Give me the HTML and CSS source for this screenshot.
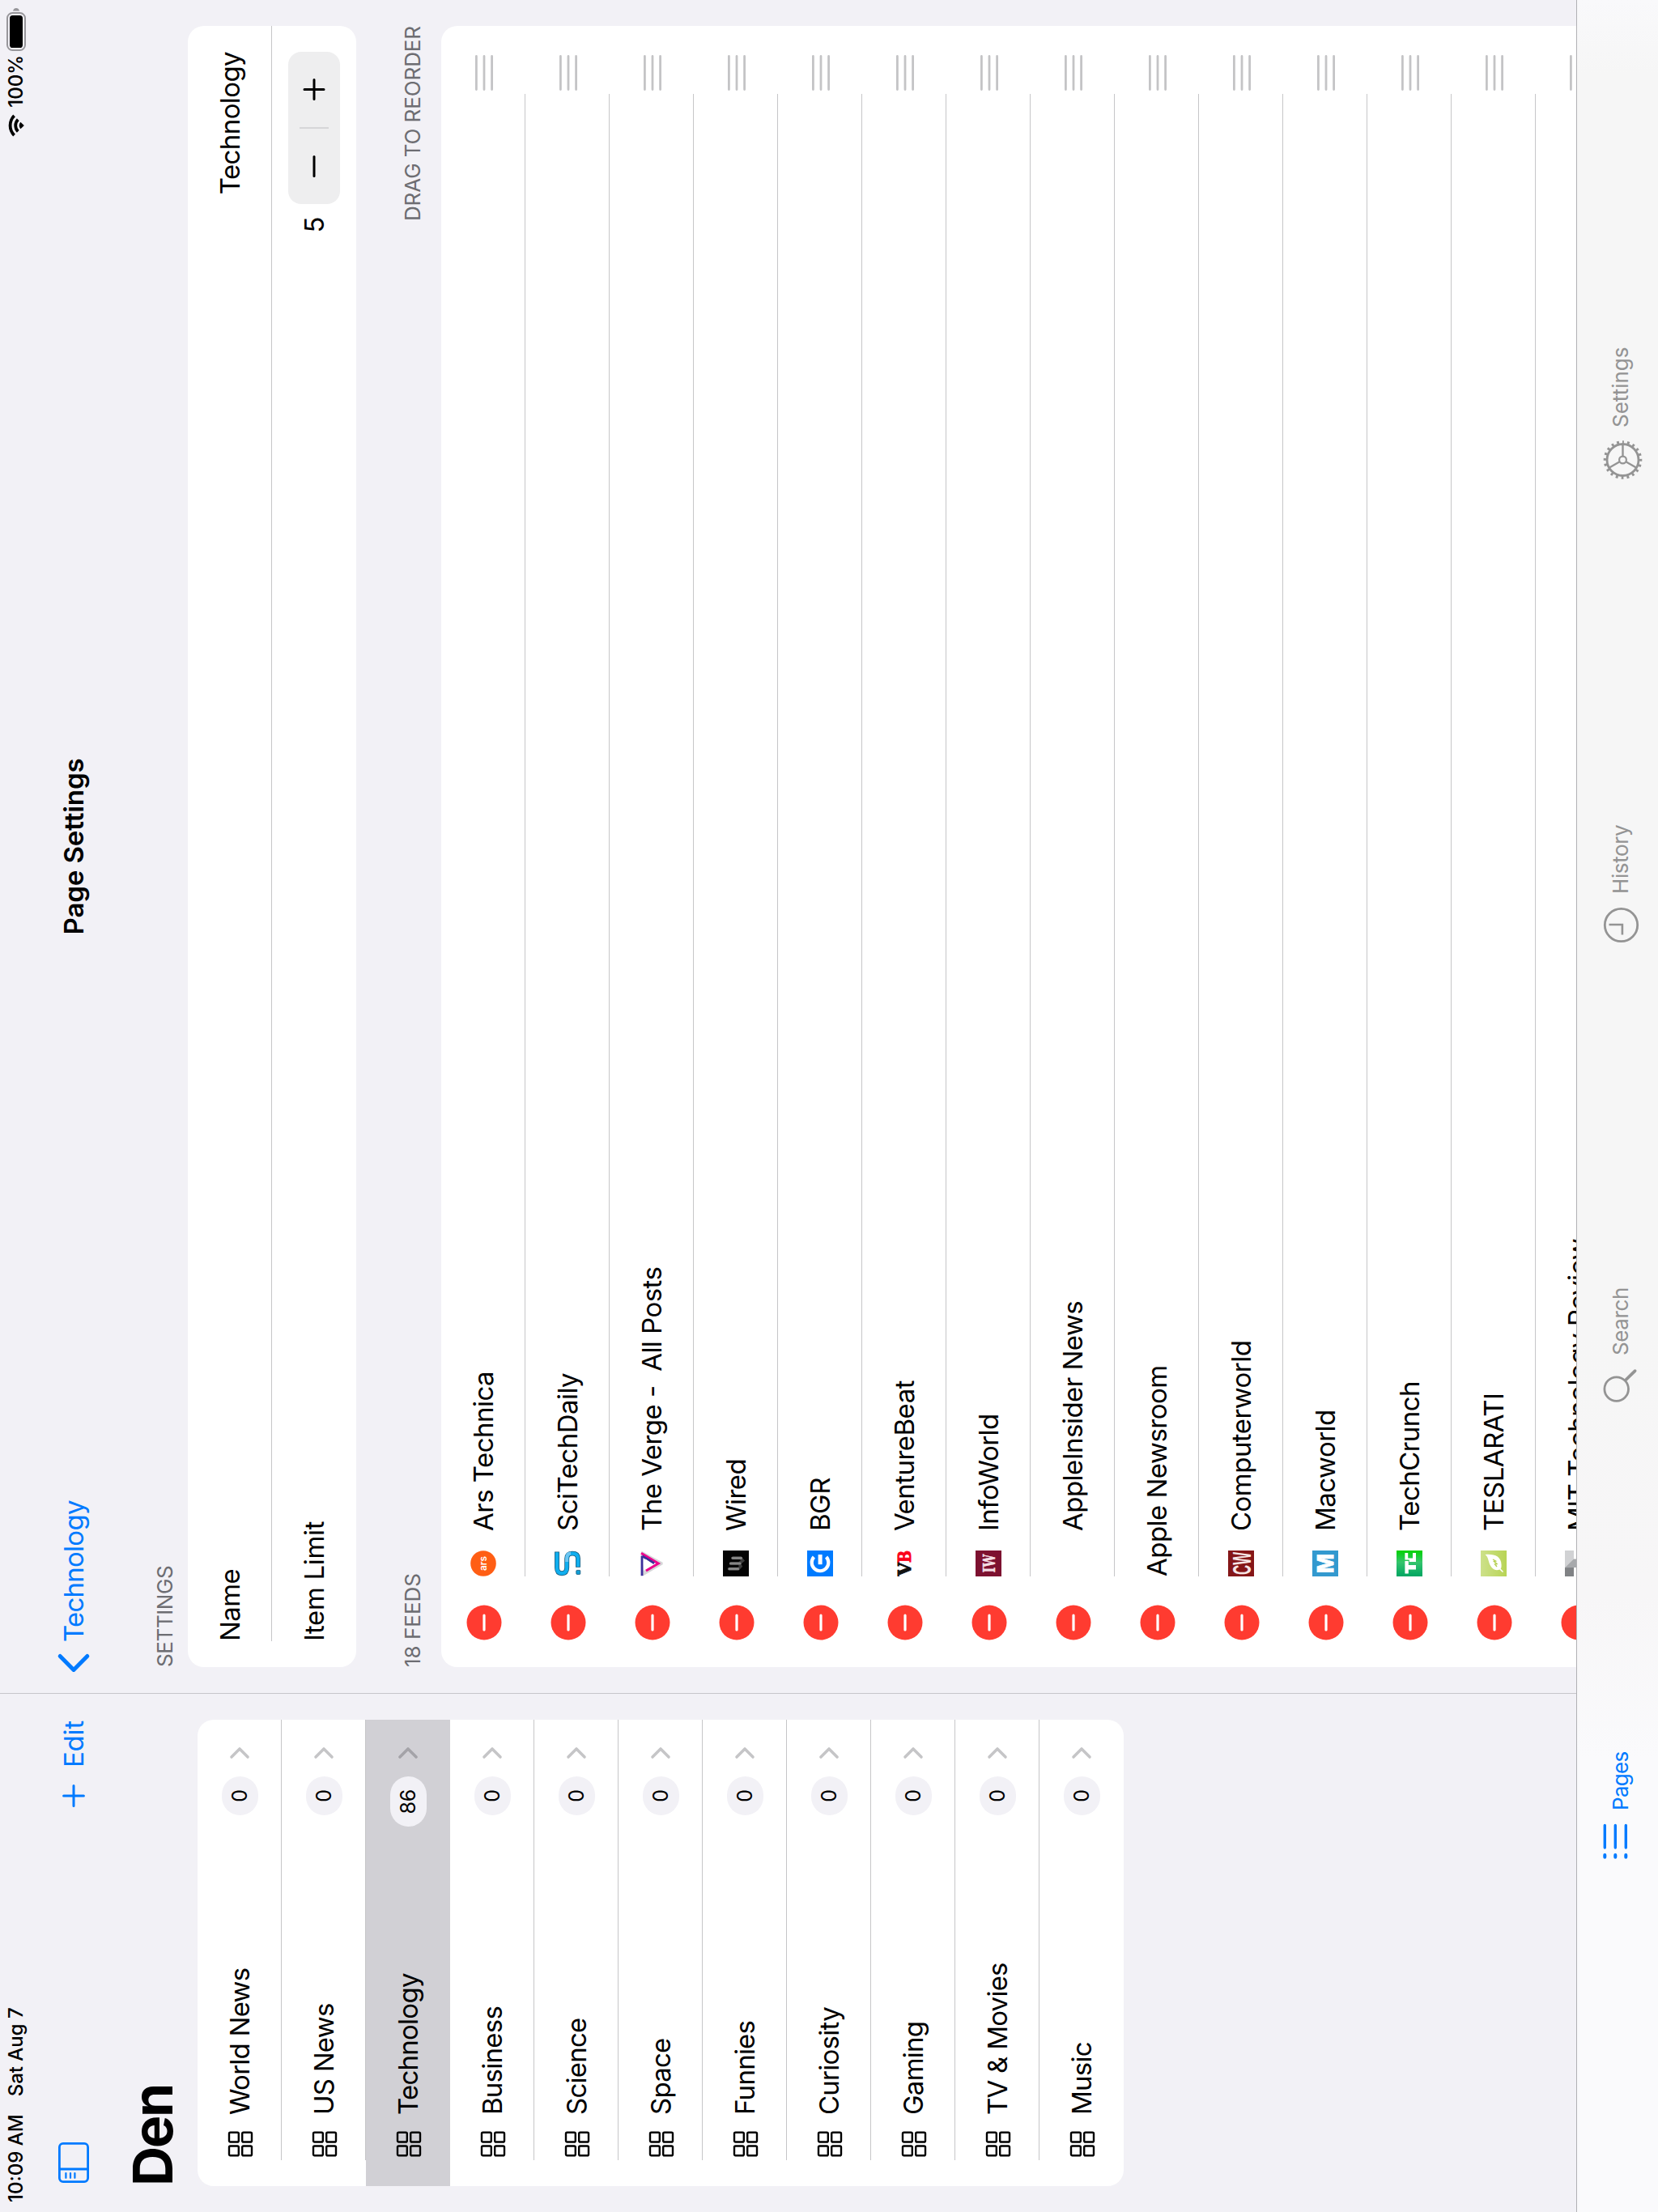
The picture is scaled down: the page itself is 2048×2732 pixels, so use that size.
FILE: index.html
```html
<!DOCTYPE html>
<html lang="en">
<head>
<meta charset="utf-8">
<title>Page Settings</title>
<link rel="stylesheet" href="styles.css">
</head>
<body>
<svg class="defs" aria-hidden="true">
  <symbol id="grid" viewBox="0 0 32 32"><g fill="none" stroke="currentColor" stroke-width="2.4"><rect x="1.7" y="2" width="11.8" height="11.8" rx="1.6"/><rect x="18.5" y="2" width="11.8" height="11.8" rx="1.6"/><rect x="1.7" y="18.2" width="11.8" height="11.8" rx="1.6"/><rect x="18.5" y="18.2" width="11.8" height="11.8" rx="1.6"/></g></symbol>
  <symbol id="chev" viewBox="0 0 16 26"><path d="M3 3 L13 13 L3 23" fill="none" stroke="currentColor" stroke-width="3.6" stroke-linecap="round" stroke-linejoin="round"/></symbol>
  <symbol id="del" viewBox="0 0 44 44"><circle cx="22" cy="22" r="21.5" fill="#ff3b30"/><path d="M13 22H31" stroke="#fff" stroke-width="3.2" stroke-linecap="round"/></symbol>
  <symbol id="grip" viewBox="0 0 44 24"><path d="M1.5 3.4H42.5M1.5 13H42.5M1.5 22.6H42.5" stroke="#c4c4c6" stroke-width="2.8" stroke-linecap="round"/></symbol>
</svg>

<div class="device">
  <div class="panes">
    <aside class="sidebar">
      <div class="status"><span class="time">10:09 AM</span><span class="date">Sat Aug 7</span></div>
      <div class="nav">
        <svg class="sidebar-icon" viewBox="0 0 50 38"><g fill="none" stroke="currentColor" stroke-width="2.8"><rect x="1.4" y="1.4" width="47.2" height="35.2" rx="4.5"/><path d="M17 1.4V36.6"/><path d="M6.2 9.4H12M6.2 15H12M6.2 20.4H12" stroke-width="2.2" stroke-linecap="round"/></g></svg>
        <svg class="plus" viewBox="0 0 28 28"><path d="M14 1.6V26.4M1.6 14H26.4" stroke="currentColor" stroke-width="3" stroke-linecap="round"/></svg>
        <span class="edit">Edit</span>
      </div>
      <h1>Den</h1>
      <ul class="pages">
        <li><svg class="gi"><use href="#grid"/></svg><span class="label">World News</span><span class="badge">0</span><svg class="chev"><use href="#chev"/></svg></li>
        <li><svg class="gi"><use href="#grid"/></svg><span class="label">US News</span><span class="badge">0</span><svg class="chev"><use href="#chev"/></svg></li>
        <li class="selected"><svg class="gi"><use href="#grid"/></svg><span class="label">Technology</span><span class="badge">86</span><svg class="chev"><use href="#chev"/></svg></li>
        <li><svg class="gi"><use href="#grid"/></svg><span class="label">Business</span><span class="badge">0</span><svg class="chev"><use href="#chev"/></svg></li>
        <li><svg class="gi"><use href="#grid"/></svg><span class="label">Science</span><span class="badge">0</span><svg class="chev"><use href="#chev"/></svg></li>
        <li><svg class="gi"><use href="#grid"/></svg><span class="label">Space</span><span class="badge">0</span><svg class="chev"><use href="#chev"/></svg></li>
        <li><svg class="gi"><use href="#grid"/></svg><span class="label">Funnies</span><span class="badge">0</span><svg class="chev"><use href="#chev"/></svg></li>
        <li><svg class="gi"><use href="#grid"/></svg><span class="label">Curiosity</span><span class="badge">0</span><svg class="chev"><use href="#chev"/></svg></li>
        <li><svg class="gi"><use href="#grid"/></svg><span class="label">Gaming</span><span class="badge">0</span><svg class="chev"><use href="#chev"/></svg></li>
        <li><svg class="gi"><use href="#grid"/></svg><span class="label">TV &amp; Movies</span><span class="badge">0</span><svg class="chev"><use href="#chev"/></svg></li>
        <li><svg class="gi"><use href="#grid"/></svg><span class="label">Music</span><span class="badge">0</span><svg class="chev"><use href="#chev"/></svg></li>
      </ul>
    </aside>

    <main class="content">
      <div class="status right">
        <svg class="wifi" viewBox="0 0 28 20"><path d="M0.6 6.2 A19 19 0 0 1 27.4 6.2 L24.7 8.9 A15.2 15.2 0 0 0 3.3 8.9Z"/><path d="M5.2 10.9 A12.6 12.6 0 0 1 22.8 10.9 L20.1 13.6 A8.7 8.7 0 0 0 7.9 13.6Z"/><path d="M9.8 15.4 A6 6 0 0 1 18.2 15.4 L14 19.8Z"/></svg>
        <span class="pct">100%</span>
        <svg class="battery" viewBox="0 0 54 24"><rect x="1" y="1" width="46" height="22" rx="6.5" fill="none" stroke="#97969a" stroke-width="2"/><rect x="4" y="4" width="40" height="16" rx="3.6"/><path d="M49.6 8 Q53 9 53 12 Q53 15 49.6 16Z" fill="#97969a"/></svg>
      </div>
      <div class="nav">
        <div class="back"><svg viewBox="0 0 24 40"><path d="M20.5 3.2 L3.6 20 L20.5 36.8" fill="none" stroke="currentColor" stroke-width="5" stroke-linecap="round" stroke-linejoin="round"/></svg><span>Technology</span></div>
        <div class="title">Page Settings</div>
        <div class="spacer"></div>
      </div>
      <div class="head first"><span class="h-settings">SETTINGS</span></div>
      <div class="card settings">
        <div class="row"><span class="name">Name</span><span class="value">Technology</span></div>
        <div class="row"><span class="name limit">Item Limit</span><span class="count">5</span>
          <div class="stepper">
            <svg viewBox="0 0 28 28"><path d="M2 14H26" stroke="#000" stroke-width="3" stroke-linecap="round"/></svg>
            <i></i>
            <svg viewBox="0 0 28 28"><path d="M2 14H26M14 2V26" stroke="#000" stroke-width="3" stroke-linecap="round"/></svg>
          </div>
        </div>
      </div>
      <div class="head second"><span class="h-feeds">18 FEEDS</span><span class="h-drag">DRAG TO REORDER</span></div>
      <div class="card feeds">
        <div class="feed"><svg class="del"><use href="#del"/></svg>
          <svg class="fav" viewBox="0 0 32 32"><circle cx="16" cy="16" r="15.8" fill="#ff5e14"/><text x="7" y="19.8" textLength="18" lengthAdjust="spacingAndGlyphs" class="f-ars">ars</text></svg><span>Ars Technica</span><svg class="grip"><use href="#grip"/></svg></div>
        <div class="feed"><svg class="del"><use href="#del"/></svg>
          <svg class="fav" viewBox="0 0 32 32"><path d="M30.4 3H11Q3.8 3 3.8 9Q3.8 15.2 11 15.2H22Q28.4 15.2 28.4 22Q28.4 29 22 29H11.3" fill="none" stroke="#16587a" stroke-width="5.9"/><path d="M29.8 3H11Q3.8 3 3.8 9Q3.8 15.2 11 15.2H22Q28.4 15.2 28.4 22Q28.4 29 22 29H12" fill="none" stroke="#10aeee" stroke-width="4.4"/><path d="M18 15.2H22Q28.4 15.2 28.4 20" fill="none" stroke="#6cc6f2" stroke-width="4"/><rect x="2.6" y="26.8" width="5" height="5" rx=".8" fill="#0f9fd8" stroke="#16587a" stroke-width=".8"/></svg><span>SciTechDaily</span><svg class="grip"><use href="#grip"/></svg></div>
        <div class="feed"><svg class="del"><use href="#del"/></svg>
          <svg class="fav" viewBox="0 0 32 32"><path d="M31.6 3.4L17.2 29.6H14.8L1 6V3Z" fill="#d6d6d8"/><path d="M25 4L7 6L15.8 22L24 8Z" fill="#fff"/><path d="M28.8 3L16 24.2L7 9" fill="none" stroke="#ec008c" stroke-width="3"/><path d="M.8 4H25.5" stroke="#3c2f9a" stroke-width="2.8"/><path d="M25 4.6L16.2 19.2" stroke="#3c2f9a" stroke-width="3"/><path d="M21.4 8.4H10.4L15.6 17Z" fill="#fff"/></svg><span class="pre">The Verge -  All Posts</span><svg class="grip"><use href="#grip"/></svg></div>
        <div class="feed"><svg class="del"><use href="#del"/></svg>
          <svg class="fav" viewBox="0 0 32 32"><path d="M0 0H32V32H0Z" fill="#040404"/><path d="M9.3 7.5V19L12.5 22L16 20V9.5M16 20L19.5 24.5L22.7 22V12" fill="none" stroke="#3c3c3c" stroke-width="3.6" stroke-linecap="round"/><path d="M9.3 8V18.5M16 9.5V21M22.7 12V22.5" stroke="#868686" stroke-width="3.2" stroke-linecap="round"/></svg><span>Wired</span><svg class="grip"><use href="#grip"/></svg></div>
        <div class="feed"><svg class="del"><use href="#del"/></svg>
          <svg class="fav" viewBox="0 0 32 32"><path d="M0 0H32V32H0Z" fill="#007bff"/><path d="M24 8.4A10.3 10.3 0 1 0 24 23.6" fill="none" stroke="#fff" stroke-width="4.2"/><path d="M14.8 13.6H27V18.6H14.8Z" fill="#fff"/></svg><span>BGR</span><svg class="grip"><use href="#grip"/></svg></div>
        <div class="feed"><svg class="del"><use href="#del"/></svg>
          <svg class="fav" viewBox="0 0 32 32"><text x=".4" y="24.4" textLength="17" lengthAdjust="spacingAndGlyphs" class="f-vb">V</text><text x="17" y="24.4" textLength="15" lengthAdjust="spacingAndGlyphs" class="f-vb red">B</text></svg><span>VentureBeat</span><svg class="grip"><use href="#grip"/></svg></div>
        <div class="feed"><svg class="del"><use href="#del"/></svg>
          <svg class="fav" viewBox="0 0 32 32"><path d="M0 0H32V32H0Z" fill="#7d1130"/><text x="4.8" y="23.6" textLength="22.4" lengthAdjust="spacingAndGlyphs" class="f-iw">IW</text></svg><span>InfoWorld</span><svg class="grip"><use href="#grip"/></svg></div>
        <div class="feed"><svg class="del"><use href="#del"/></svg>
          <svg class="fav" viewBox="0 0 32 32"></svg><span>AppleInsider News</span><svg class="grip"><use href="#grip"/></svg></div>
        <div class="feed"><svg class="del"><use href="#del"/></svg>
          <span>Apple Newsroom</span><svg class="grip"><use href="#grip"/></svg></div>
        <div class="feed"><svg class="del"><use href="#del"/></svg>
          <svg class="fav" viewBox="0 0 32 32"><path d="M0 0H32V32H0Z" fill="#851618"/><text x="2" y="27.5" textLength="28" lengthAdjust="spacingAndGlyphs" class="f-cw">CW</text></svg><span>Computerworld</span><svg class="grip"><use href="#grip"/></svg></div>
        <div class="feed"><svg class="del"><use href="#del"/></svg>
          <svg class="fav" viewBox="0 0 32 32"><path d="M0 0H32V32H0Z" fill="#3399cf"/><text x="4" y="26" textLength="24" lengthAdjust="spacingAndGlyphs" class="f-m">M</text></svg><span>Macworld</span><svg class="grip"><use href="#grip"/></svg></div>
        <div class="feed"><svg class="del"><use href="#del"/></svg>
          <svg class="fav" viewBox="0 0 32 32"><defs><linearGradient id="tc" x1="0" y1="0" x2="1" y2="0"><stop offset="0" stop-color="#00a562"/><stop offset=".55" stop-color="#34c46c"/><stop offset="1" stop-color="#00d301"/></linearGradient></defs><path d="M0 0H32V32H0Z" fill="url(#tc)"/><path d="M3.4 10.4H19V14.8H14V24H8.6V14.8H3.4Z" fill="#fff"/><path d="M20.5 10.4H29V14.2H22.5V20H29V24H18V15.8H20.5Z" fill="#fff"/></svg><span>TechCrunch</span><svg class="grip"><use href="#grip"/></svg></div>
        <div class="feed"><svg class="del"><use href="#del"/></svg>
          <svg class="fav" viewBox="0 0 32 32"><defs><linearGradient id="leaf" x1="0" y1="0" x2="0" y2="1"><stop offset="0" stop-color="#cde18a"/><stop offset="1" stop-color="#b8d455"/></linearGradient></defs><path d="M0 0H32V32H0Z" fill="url(#leaf)"/><path d="M27 5.5C28 16 25.5 25.5 14 25.6Q10.5 25.8 9.6 24.6L6 28L5 27L8.4 23.4C6.5 18 9 14.2 14 11.6C19 9.2 24 9.5 27 5.5Z" fill="#fff"/><path d="M12 20L15 17.5L15.5 20L18.5 16.5L19 18.5L21 15" fill="none" stroke="#b5d050" stroke-width="1.4"/></svg><span>TESLARATI</span><svg class="grip"><use href="#grip"/></svg></div>
        <div class="feed"><svg class="del"><use href="#del"/></svg>
          <svg class="fav" viewBox="0 0 32 32"><path d="M10.5 0H32V11H10.5Z" fill="#d1d2d4"/><path d="M0 0H11V11H0Z" fill="#808285"/><path d="M10.8 0L21.5 11V32H11Z" fill="#a7a9ac"/></svg><span>MIT Technology Review</span><svg class="grip"><use href="#grip"/></svg></div>
      </div>
    </main>
  </div>

  <nav class="tabbar">
    <div class="tab active"><svg width="44" height="48" viewBox="0 0 44 48"><g stroke="currentColor" stroke-linecap="round"><path d="M14 5.3H41.6M14 18.3H41.6M14 31.3H41.6" stroke-width="3.4"/><path d="M2.2 5.3H5M2.2 18.3H5M2.2 31.3H5" stroke-width="4"/></g></svg><span class="t1">Pages</span></div>
    <div class="tab"><svg width="42" height="48" viewBox="0 0 42 48"><g fill="none" stroke="currentColor" stroke-linecap="round"><circle cx="16.4" cy="19.7" r="14.8" stroke-width="2.8"/><path d="M27.5 31L38.8 42.6" stroke-width="3.8"/></g></svg><span class="t2">Search</span></div>
    <div class="tab"><svg width="44" height="48" viewBox="0 0 44 48"><g fill="none" stroke="currentColor"><circle cx="21.5" cy="25.5" r="20.2" stroke-width="2.8"/><path d="M22 10.5V26.9H9.5" stroke-width="2.6"/></g></svg><span class="t3">History</span></div>
    <div class="tab"><svg width="48" height="48" viewBox="0 0 48 48"><g fill="none" stroke="currentColor"><circle cx="24" cy="27.5" r="19.5" stroke-width="2.8"/><circle cx="24" cy="27.5" r="22" stroke-width="3.6" stroke-dasharray="2.8 4.1115" stroke-dashoffset="1.4"/><circle cx="24" cy="27.5" r="4.4" stroke-width="2.2"/><path d="M29 27.5H43.5M21.5 23.2L14.3 10.6M21.5 31.8L14.3 44.4" stroke-width="2.4"/></g></svg><span class="t4">Settings</span></div>
  </nav>
</div>
</body>
</html>
```
FILE: styles.css
```css
* { box-sizing: border-box; }
html { overflow: hidden; }
body {
  margin: 0;
  width: 2048px;
  height: 2732px;
  overflow: hidden;
  background: #f2f1f6;
  font-family: Inter, "Liberation Sans", sans-serif;
  color: #000;
}
.defs { display: none; }

/* The tablet is held sideways: a landscape layout turned a quarter left. */
.device {
  width: 2732px;
  height: 2048px;
  display: flex;
  flex-direction: column;
  overflow: hidden;
  transform-origin: 0 0;
  transform: rotate(-90deg) translateX(-2732px);
  font-size: 33px;
  letter-spacing: -0.6px;
  white-space: nowrap;
}
svg { flex: none; display: block; overflow: visible; }
.pre { white-space: pre; }

.panes { display: flex; height: 1947px; overflow: hidden; }
.sidebar { width: 640px; flex: none; }
.content { flex: 1; border-left: 1px solid #c6c5ca; padding: 0 32px; }

.status {
  display: flex;
  align-items: center;
  height: 39px;
  font-size: 24px;
  font-weight: 500;
  letter-spacing: 0;
  padding-left: 12px;
}
.date { margin-left: 22px; }
.status.right { justify-content: flex-end; margin-right: -32px; padding-right: 9px; }
.wifi { width: 28px; height: 20px; margin-right: 8px; }
.battery { width: 54px; height: 24px; margin-left: 5px; }

.nav { display: flex; align-items: center; height: 103px; color: #007aff; }
.sidebar .nav { padding: 0 33px 0 36px; }
.sidebar-icon { width: 50px; height: 38px; }
.plus { width: 28px; height: 28px; margin-left: auto; }
.edit { margin-left: 21px; letter-spacing: -0.2px; }

h1 {
  margin: 0;
  height: 92px;
  line-height: 92px;
  padding-left: 32px;
  font-size: 68px;
  font-weight: 700;
  letter-spacing: -2.3px;
}

.pages {
  list-style: none;
  margin: 10px 32px 0;
  padding: 0;
  background: #fff;
  border-radius: 20px;
  overflow: hidden;
}
.pages li {
  position: relative;
  display: flex;
  align-items: center;
  height: 104px;
  padding: 0 33px 0 36px;
}
.pages li:not(:last-child)::after,
.row:not(:last-child)::after,
.feed::after {
  content: "";
  position: absolute;
  left: 32px;
  right: 0;
  bottom: 0;
  height: 1px;
  background: #c6c6c8;
}
.pages li.selected { background: #d1d0d5; }
.pages li.selected::after { display: none; }
.gi { width: 32px; height: 32px; margin-top: 2px; }
.label { flex: 1; margin-left: 20px; letter-spacing: -0.75px; }
.badge {
  min-width: 48px;
  height: 45px;
  line-height: 45px;
  padding: 0 16px;
  border-radius: 23px;
  background: #f2f1f6;
  font-size: 25px;
  letter-spacing: -0.3px;
  text-align: center;
}
.chev { width: 16px; height: 26px; margin-left: 21px; color: #c5c5c7; }
.selected .chev { color: #a4a3a8; }

.content .nav { margin: 0 -32px; padding-left: 25px; }
.back { display: flex; align-items: center; flex: 1; letter-spacing: -0.75px; }
.back svg { width: 24px; height: 40px; margin-right: 14px; }
.title { color: #000; font-weight: 600; letter-spacing: -0.1px; }
.spacer { flex: 1; margin-left: 25px; }

.head {
  display: flex;
  justify-content: space-between;
  font-size: 26px;
  color: #6d6d72;
  letter-spacing: -0.1px;
}
.head.first { margin-top: 34px; height: 56px; line-height: 56px; }
.head.second { margin-top: 35px; height: 70px; line-height: 70px; }
.h-settings { letter-spacing: -0.4px; }
.h-feeds { letter-spacing: 0; }

.card { background: #fff; border-radius: 20px; }
.row {
  position: relative;
  display: flex;
  align-items: center;
  height: 104px;
  padding: 0 32px;
}
.name { flex: 1; }
.name.limit { letter-spacing: -0.35px; }
.stepper {
  display: flex;
  align-items: center;
  width: 188px;
  height: 64px;
  margin-left: 16px;
  border-radius: 16px;
  background: #eeeeef;
}
.stepper svg { flex: 1; height: 28px; }
.stepper i { width: 2px; height: 36px; background: #d6d6d8; }

.feed {
  position: relative;
  display: flex;
  align-items: center;
  height: 104px;
  padding: 0 36px 0 33px;
  letter-spacing: -0.53px;
}
.feed::after { left: 112px; right: 84px; }
.del { width: 44px; height: 44px; margin: 1px 35px 0 0; }
.fav { width: 32px; height: 32px; margin-right: 24px; }
.grip { width: 44px; height: 24px; margin-left: auto; }

.f-ars { font: 600 12px Inter, sans-serif; letter-spacing: 0; fill: #fff; }
.f-vb { font: bold 23px "DejaVu Serif", serif; letter-spacing: 0; fill: #111; stroke: #111; stroke-width: 1; }
.f-vb.red { fill: #fb0019; stroke: #fb0019; }
.f-iw { font: bold 21px "DejaVu Serif", serif; letter-spacing: 0; fill: #f3dfe5; stroke: #f3dfe5; stroke-width: .5; }
.f-cw { font: bold 32px "Liberation Sans", sans-serif; letter-spacing: 0; fill: #f7e6e6; }
.f-m { font: 800 27px Inter, sans-serif; letter-spacing: 0; fill: #fff; stroke: #fff; stroke-width: .8; }

.tabbar {
  display: grid;
  grid-template-columns: 564px 568px 572px 1fr;
  align-items: center;
  height: 101px;
  padding: 6px 0 0 436px;
  border-top: 1px solid #b1b1b4;
  background: linear-gradient(90deg, #fafafc 0, #fafafc 560px, #f7f6f7 760px, #f6f6f6 1100px, #f6f6f6 2640px, #f9f9fb 2732px);
}
.tab {
  display: flex;
  align-items: center;
  gap: 16px;
  font-size: 26px;
  letter-spacing: -0.4px;
  color: #949494;
}
.tab.active { color: #007aff; }
.t1 { letter-spacing: -0.7px; }
.t4 { letter-spacing: 0; }
```
